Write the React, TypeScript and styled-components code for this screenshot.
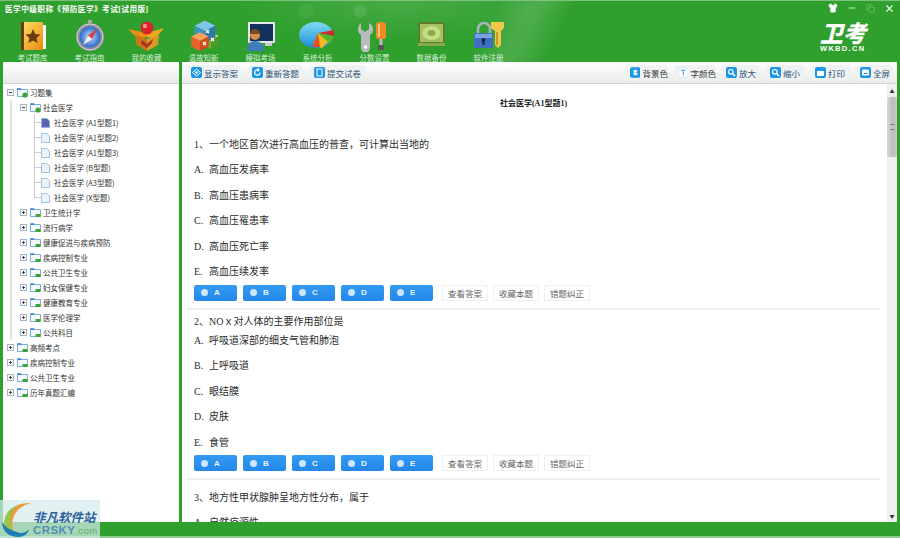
import styled, {createGlobalStyle} from "styled-components";
import {Copy, Minus, Shirt, X} from "lucide-react";

const GlobalStyle = createGlobalStyle`
  html, body {
    margin: 0;
    width: 900px;
    height: 538px;
    overflow: hidden;
    background: #2f9f2e;
    font-family: "Noto Sans CJK SC", "Liberation Sans", sans-serif;
  }
  ul { list-style: none; margin: 0; padding: 0; }
`

const Window = styled.div`
  position: relative;
  width: 900px;
  height: 538px;
  display: flex;
  flex-direction: column;
  overflow: hidden;
  background: #2f9f2e;
`
const Header = styled.header`
  height: 62px;
  flex: none;
  box-sizing: border-box;
  border-top: 1px solid #7cc27a;
  background:
    radial-gradient(circle at 360px 10px, rgba(255, 255, 255, .09) 0 6px, transparent 7px),
    radial-gradient(circle at 306px 10px, rgba(255, 255, 255, .05) 0 7px, transparent 8px),
    linear-gradient(118deg, transparent 0 440px, rgba(255, 255, 255, .13) 470px 480px, transparent 510px),
    radial-gradient(ellipse 170px 40px at 400px 0, rgba(255, 255, 255, .12), transparent),
    #2f9f2e;
`
const TitleRow = styled.div`
  height: 19px;
  box-sizing: border-box;
  display: flex;
  align-items: center;
  justify-content: space-between;
  padding: 0 5px 5px;
`
const AppTitle = styled.h1`
  margin: 0;
  font-family: "Liberation Serif", "Noto Sans CJK SC", serif;
  font-size: 7.6px;
  font-weight: 700;
  letter-spacing: .5px;
  color: #fff;
  white-space: nowrap;
`
const WindowControls = styled.div`
  display: flex;
  align-items: center;
  gap: 9px;
  color: #e9f6e9;
`
const NavRow = styled.nav`
  display: flex;
  padding-left: 4px;
`
const NavItem = styled.div`
  width: 57px;
  display: flex;
  flex-direction: column;
  align-items: center;
`
const NavLabel = styled.span`
  margin-top: 1px;
  font-size: 7.5px;
  line-height: 10px;
  color: #d6eed5;
  white-space: nowrap;
`
const Brand = styled.div`
  margin-left: auto;
  width: 80px;
  display: flex;
  flex-direction: column;
  color: #fff;
`
const BrandMark = styled.span`
  font-size: 23px;
  line-height: 21px;
  font-weight: 900;
  font-style: italic;
  margin-top: 2px;
`
const BrandSub = styled.span`
  margin-top: 2px;
  font-family: "Liberation Sans", sans-serif;
  font-size: 7.5px;
  line-height: 8px;
  font-weight: 700;
  letter-spacing: 1.3px;
`
const Body = styled.main`
  height: 460px;
  flex: none;
  display: flex;
  gap: 3px;
  padding: 0 3px;
`
const LeftPanel = styled.aside`
  width: 176px;
  flex: none;
  background: #fff;
`
const RightPanel = styled.section`
  flex: 1;
  min-width: 0;
  display: flex;
  flex-direction: column;
  background: #fff;
`
const Toolbar = styled.div`
  height: 22px;
  flex: none;
  box-sizing: border-box;
  display: flex;
  align-items: center;
  gap: 7px;
  padding: 0 4px 0 5px;
  background: linear-gradient(#fff, #e8e9e9);
  border-bottom: 1px solid #d6d6d6;
`
const ToolGroup = styled.div`
  margin-left: auto;
  display: flex;
  align-items: center;
  gap: 6px;
`
const ToolButton = styled.div<{$width: number; $dark?: boolean}>`
  width: ${props => props.$width}px;
  height: 16px;
  box-sizing: border-box;
  display: flex;
  align-items: center;
  gap: 2px;
  padding-left: 4px;
  border-radius: 4px;
  background: #f0f2f2;
  font-size: 8.5px;
  color: ${props => props.$dark ? "#3a3a3a" : "#2c5478"};
  white-space: nowrap;
`
const Tree = styled.div`
  padding-top: 1px;
`
const TreeRow = styled.div`
  height: 15px;
  display: flex;
  align-items: center;
  font-size: 7.5px;
  color: #333;
  white-space: nowrap;
`
const RootRow = styled(TreeRow)`
  padding-left: 4px;
`
const Toggle = styled.span`
  width: 7px;
  height: 7px;
  box-sizing: border-box;
  margin-right: 3px;
  flex: none;
  position: relative;
  border: 1px solid #a9b4c4;
  background: #f4f6fa;

  &::before {
    content: "";
    position: absolute;
    left: 1px;
    top: 2px;
    width: 3px;
    height: 1px;
    background: #445;
  }
`
const PlusToggle = styled(Toggle)`
  &::after {
    content: "";
    position: absolute;
    left: 2px;
    top: 1px;
    width: 1px;
    height: 3px;
    background: #445;
  }
`
const RowLabel = styled.span`
  margin-left: 2px;
`
const BranchList = styled.ul`
  margin-left: 7px;
  border-left: 2px solid #e2e2e2;
`
const BranchRow = styled(TreeRow)`
  padding-left: 8px;
`
const LeafList = styled.ul`
  margin-left: 22px;
`
const LeafRow = styled(TreeRow)`
  position: relative;
  padding-left: 7px;

  &::before {
    content: "";
    position: absolute;
    left: 0;
    top: 0;
    width: 6px;
    height: 7px;
    border-left: 1px solid #cfcfcf;
    border-bottom: 1px solid #cfcfcf;
  }

  li:not(:last-child) > &::after {
    content: "";
    position: absolute;
    left: 0;
    top: 7px;
    bottom: 0;
    border-left: 1px solid #cfcfcf;
  }
`
const LeafLabel = styled.span`
  margin-left: 4px;
`
const PaperArea = styled.div`
  flex: 1;
  min-height: 0;
  display: flex;
  overflow: hidden;
`
const Paper = styled.div`
  flex: 1;
  min-width: 0;
  padding: 0 7px 0 5px;
  font-family: "Liberation Serif", "Noto Sans CJK SC", serif;
  color: #2b2b2b;
`
const PaperTitle = styled.h2`
  margin: 0;
  height: 43px;
  box-sizing: border-box;
  padding-top: 14px;
  font-size: 8px;
  line-height: 12px;
  font-weight: 700;
  text-align: center;
  color: #222;
`
const QuestionBlock = styled.article<{$divided?: boolean}>`
  padding-top: 4px;
  border-bottom: ${props => props.$divided ? "2px solid #eeeeee" : "none"};
  padding-bottom: ${props => props.$divided ? "7px" : "0"};
`
const QuestionText = styled.div<{$height: number}>`
  height: ${props => props.$height}px;
  line-height: ${props => props.$height + 2}px;
  padding-left: 7px;
  font-size: 10px;
  white-space: nowrap;
`
const OptionRow = styled.div`
  height: 25.5px;
  line-height: 26px;
  padding-left: 7px;
  font-size: 10px;
  white-space: nowrap;
`
const OptionKey = styled.span`
  display: inline-block;
  width: 15px;
`
const AnswerRow = styled.div`
  display: flex;
  padding-left: 7px;
`
const ChoiceButton = styled.div`
  width: 43px;
  height: 16px;
  margin-right: 6px;
  box-sizing: border-box;
  display: flex;
  align-items: center;
  padding-left: 7px;
  gap: 6px;
  border-radius: 2px;
  background: linear-gradient(#349bf3, #2287ea);
  font-family: "Liberation Sans", sans-serif;
  font-size: 8px;
  font-weight: 700;
  color: #e8f3ff;
`
const ChoiceDot = styled.span`
  width: 7px;
  height: 7px;
  border-radius: 50%;
  background: #cfe5fb;
`
const LinkButton = styled.div`
  width: 46px;
  height: 16px;
  margin-right: 5px;
  box-sizing: border-box;
  border: 1px solid #efefef;
  text-align: center;
  font-family: "Noto Sans CJK SC", sans-serif;
  font-size: 8.5px;
  line-height: 14px;
  color: #666;
`
const FirstLink = styled(LinkButton)`
  margin-left: 3px;
`
const ScrollTrack = styled.div`
  width: 10px;
  flex: none;
  display: flex;
  flex-direction: column;
  align-items: center;
  background: #f0f0f0;
`
const ScrollArrow = styled.span`
  height: 13px;
  font-size: 5px;
  line-height: 13px;
  color: #333;
`
const ScrollThumb = styled.div`
  width: 10px;
  height: 60px;
  display: flex;
  align-items: center;
  justify-content: center;
  border-radius: 1px;
  background: linear-gradient(90deg, #d8d8d8, #bcbcbc 60%, #cdcdcd);

  &::after {
    content: "";
    width: 5px;
    height: 4px;
    border-top: 1px solid #888;
    border-bottom: 1px solid #888;
  }
`
const ScrollFill = styled.div`
  flex: 1;
`
const Footer = styled.footer`
  flex: 1;
  border-bottom: 2px solid #8ccb8a;
  background: #2f9f2e;
`
const Watermark = styled.div`
  position: absolute;
  left: 0;
  bottom: 0;
  width: 100px;
  height: 38px;
  display: flex;
  background: rgba(214, 236, 236, .72);
`
const WatermarkText = styled.div`
  margin-left: 1px;
  padding-top: 9px;
  display: flex;
  flex-direction: column;
`
const WatermarkName = styled.span`
  font-size: 12.5px;
  line-height: 15px;
  font-weight: 700;
  font-style: italic;
  color: #2c5f9e;
  white-space: nowrap;
`
const WatermarkUrl = styled.span`
  font-family: "Liberation Sans", sans-serif;
  font-size: 11.5px;
  line-height: 12px;
  font-weight: 700;
  letter-spacing: .4px;
  color: #4d8fb8;
  white-space: nowrap;
`
const WatermarkCom = styled.span`
  font-size: 9.5px;
  font-weight: 400;
  color: #5fb06a;
`

function BookIcon() {
    return (
        <svg width="40" height="32" viewBox="0 0 40 32">
            <defs>
                <linearGradient id="bookFill" x1="0" y1="0" x2="1" y2="1">
                    <stop offset="0" stopColor="#ffe36a"/>
                    <stop offset="1" stopColor="#e8890f"/>
                </linearGradient>
            </defs>
            <rect x="29" y="5" width="4" height="24" fill="#f4f4f0"/>
            <rect x="8" y="2" width="22" height="28" rx="1" fill="url(#bookFill)"/>
            <rect x="8" y="2" width="3" height="28" fill="#6a3d10"/>
            <polygon points="20,9 22.2,14 27.5,14.5 23.5,18 24.7,23 20,20.4 15.3,23 16.5,18 12.5,14.5 17.8,14" fill="#6b3a10"/>
        </svg>
    )
}

function CompassIcon() {
    return (
        <svg width="40" height="32" viewBox="0 0 40 32">
            <defs>
                <radialGradient id="compassFill">
                    <stop offset="0" stopColor="#bfe0ff"/>
                    <stop offset="1" stopColor="#2c68c8"/>
                </radialGradient>
            </defs>
            <rect x="18" y="0" width="4" height="3" fill="#aaa"/>
            <circle cx="20" cy="17" r="14" fill="#8c8f96"/>
            <circle cx="20" cy="17" r="13" fill="none" stroke="#d8d8dc" strokeWidth="1"/>
            <circle cx="20" cy="17" r="10.5" fill="url(#compassFill)"/>
            <polygon points="27,9 18,15.5 22,19" fill="#e23b30"/>
            <polygon points="13,25 18,15.5 22,19" fill="#f2f2f2"/>
        </svg>
    )
}

function BoxIcon() {
    return (
        <svg width="40" height="32" viewBox="0 0 40 32">
            <polygon points="20,13 37,8 28,19 20,17" fill="#f2a81d"/>
            <polygon points="20,13 1,9 11,19 20,17" fill="#e98e17"/>
            <polygon points="8,15 20,19 20,31 9,25" fill="#c9781a"/>
            <polygon points="32,15 20,19 20,31 31,25" fill="#dc9a28"/>
            <polygon points="15,20 20,24 26,19 25,23 20,28 14,24" fill="#a8341a"/>
            <circle cx="20" cy="8" r="6.5" fill="#d8232a"/>
            <circle cx="18" cy="6" r="2.2" fill="#ff8d8d"/>
        </svg>
    )
}

function Cube({x, y, scale, top, left, right}: {x: number; y: number; scale: number; top: string; left: string; right: string}) {
    return (
        <g transform={`translate(${x} ${y}) scale(${scale})`}>
            <polygon points="0,-8 8,-4 0,0 -8,-4" fill={top}/>
            <polygon points="-8,-4 0,0 0,9 -8,5" fill={left}/>
            <polygon points="8,-4 0,0 0,9 8,5" fill={right}/>
        </g>
    )
}

function CubesIcon() {
    return (
        <svg width="40" height="32" viewBox="0 0 40 32">
            <Cube x={27} y={20} scale={1} top="#b9e07a" left="#6fb53a" right="#4f9a28"/>
            <Cube x={21} y={11} scale={1.3} top="#7fc6e8" left="#3d93c4" right="#2b7aa8"/>
            <Cube x={16} y={21} scale={1.1} top="#f7a35a" left="#e8642a" right="#d34a1e"/>
            <path d="M22 10l3 3M25 10l-3 3M19 22l3 3M22 22l-3 3M27 18l3 3M30 18l-3 3" stroke="#fff" strokeWidth="1.2"/>
        </svg>
    )
}

function MonitorIcon() {
    return (
        <svg width="40" height="32" viewBox="0 0 40 32">
            <rect x="7" y="2" width="27" height="21" rx="1" fill="#e4e7ea"/>
            <rect x="9" y="4" width="23" height="17" fill="#12325c"/>
            <rect x="24" y="23" width="7" height="3" fill="#c6cacd"/>
            <circle cx="14" cy="15" r="5" fill="#d9904a"/>
            <path d="M9 14a5 5 0 0 1 10 0z" fill="#7a4a20"/>
            <path d="M6 31c0-8 4-10 8-10s9 2 9 10z" fill="#3f7fb8"/>
        </svg>
    )
}

function PieIcon() {
    return (
        <svg width="40" height="32" viewBox="0 0 40 32">
            <defs>
                <linearGradient id="pieFill" x1="0" y1="0" x2="0" y2="1">
                    <stop offset="0" stopColor="#7fdcf4"/>
                    <stop offset="1" stopColor="#1a8ed0"/>
                </linearGradient>
            </defs>
            <ellipse cx="18" cy="15" rx="17" ry="13" fill="url(#pieFill)"/>
            <polygon points="20,13 36,10 36,16 24,14" fill="#d12a2a"/>
            <polygon points="20,13 36,16 32,24 24,17" fill="#52b52c"/>
            <polygon points="20,13 30,22 24,28 16,26" fill="#f4b81c"/>
            <polygon points="20,13 22,27 14,27" fill="#e8541e"/>
        </svg>
    )
}

function ToolsIcon() {
    return (
        <svg width="40" height="32" viewBox="0 0 40 32">
            <path d="M6 3v6l4 3 4-3V3c4 2 5 7 3 10l-2 2v13a4 4 0 0 1-9 0V15l-2-2C2 10 3 5 6 3z" fill="#b9bcbc"/>
            <circle cx="10.5" cy="27" r="1.8" fill="#fff"/>
            <rect x="21" y="2" width="10" height="17" rx="3" fill="#f28a22"/>
            <rect x="23" y="4" width="2" height="13" fill="#ffc680"/>
            <rect x="24.5" y="19" width="3" height="6" fill="#bbb"/>
            <rect x="23" y="25" width="6" height="5" rx="1" fill="#555"/>
        </svg>
    )
}

function DriveIcon() {
    return (
        <svg width="40" height="32" viewBox="0 0 40 32">
            <rect x="6" y="2" width="27" height="24" rx="2" fill="#5d7d2c"/>
            <rect x="8" y="4" width="23" height="18" fill="#a3c25c"/>
            <ellipse cx="19.5" cy="13" rx="9" ry="7" fill="#c6dc86"/>
            <ellipse cx="19.5" cy="13" rx="4" ry="3" fill="#8cab47"/>
            <rect x="6" y="23" width="27" height="3" fill="#8aa84a"/>
        </svg>
    )
}

function LockIcon() {
    return (
        <svg width="40" height="32" viewBox="0 0 40 32">
            <path d="M9 14V9a6 6 0 0 1 12 0v5" fill="none" stroke="#a8b4c6" strokeWidth="2.5"/>
            <rect x="5" y="13" width="19" height="15" rx="1" fill="#3e6fc0"/>
            <rect x="6" y="14" width="17" height="4" fill="#7ba1e0"/>
            <circle cx="14.5" cy="20" r="2" fill="#12264f"/>
            <rect x="13.5" y="20" width="2" height="5" fill="#12264f"/>
            <path d="M22 2h13v6l-3 3v14l-3 3-3-3V11l-4-3z" fill="#f1c84a"/>
            <rect x="27" y="12" width="2" height="13" fill="#c89c22"/>
        </svg>
    )
}

function ToolGlyph({kind}: {kind: string}) {
    if (kind === "font") {
        return (
            <svg width="11" height="11" viewBox="0 0 11 11">
                <rect x=".5" y=".5" width="10" height="10" rx="2" fill="#fff" stroke="#cde6f8"/>
                <path d="M3 3h5M5.5 3v5.5" stroke="#3aa0e6" strokeWidth="1"/>
            </svg>
        )
    }
    return (
        <svg width="11" height="11" viewBox="0 0 11 11">
            <rect width="11" height="11" rx="2" fill="#1c97e8"/>
            {kind === "eye" && <><path d="M1.5 5.5L5.5 2l4 3.5-4 3.5z" fill="none" stroke="#fff"/><circle cx="5.5" cy="5.5" r="1.2" fill="#fff"/></>}
            {kind === "redo" && <path d="M8 5.5A2.7 2.7 0 1 1 6 2.900M5.5 1.5l1.5 1.400L5.5 4.300" fill="none" stroke="#fff" strokeWidth="1.2"/>}
            {kind === "paper" && <rect x="3" y="2" width="5" height="7" fill="none" stroke="#fff"/>}
            {kind === "bg" && <path d="M3.5 2.5h3c2 0 2 2.700 0 3 2.300 0 2.300 3 0 3h-3zM4.700 5.5h1.500" fill="#fff" stroke="#1c97e8" strokeWidth=".5"/>}
            {kind === "zoom" && <><circle cx="4.8" cy="4.8" r="2.3" fill="none" stroke="#fff" strokeWidth="1.2"/><path d="M6.5 6.5L9 9" stroke="#fff" strokeWidth="1.5"/></>}
            {kind === "print" && <rect x="2" y="4" width="7" height="5" fill="#fff"/>}
            {kind === "full" && <><rect x="2" y="2.5" width="7" height="6" rx="1" fill="#fff"/><path d="M3.5 6.5h4" stroke="#1c97e8"/></>}
        </svg>
    )
}

function FolderIcon({kind}: {kind: "open" | "closed"}) {
    return (
        <svg width="11" height="11" viewBox="0 0 11 11" style={{flex: "none"}}>
            <path d="M.5 2.5V1.500h3l1 1h6v7H.5z" fill="#f4f8fc" stroke="#5b9ad6" strokeWidth=".8"/>
            <rect x=".5" y="1.5" width="4" height="1.5" fill="#3b8ae0"/>
            {kind === "open"
                ? <circle cx="8" cy="8" r="2.6" fill="#3aa52f"/>
                : <rect x="5.5" y="7" width="5" height="3" fill="#3aa52f"/>}
        </svg>
    )
}

function DocIcon({active}: {active?: boolean}) {
    return (
        <svg width="9" height="10" viewBox="0 0 9 10" style={{flex: "none"}}>
            <path d="M.5.5h5.500l2.500 2.500v6.500h-8z" fill={active ? "#5a62b4" : "#eaf3fc"} stroke="#8cb2da" strokeWidth=".8"/>
        </svg>
    )
}

const navItems = [
    {label: "考试题库", icon: <BookIcon/>},
    {label: "考试指南", icon: <CompassIcon/>},
    {label: "我的收藏", icon: <BoxIcon/>},
    {label: "温故知新", icon: <CubesIcon/>},
    {label: "模拟考场", icon: <MonitorIcon/>},
    {label: "系统分析", icon: <PieIcon/>},
    {label: "分数设置", icon: <ToolsIcon/>},
    {label: "数据备份", icon: <DriveIcon/>},
    {label: "软件注册", icon: <LockIcon/>},
]

const leftTools = [
    {label: "显示答案", kind: "eye", width: 54},
    {label: "重新答题", kind: "redo", width: 55},
    {label: "提交试卷", kind: "paper", width: 56},
]

const rightTools = [
    {label: "背景色", kind: "bg", width: 42, dark: true},
    {label: "字颜色", kind: "font", width: 42, dark: true},
    {label: "放大", kind: "zoom", width: 38},
    {label: "缩小", kind: "zoom", width: 39},
    {label: "打印", kind: "print", width: 39},
    {label: "全屏", kind: "full", width: 37},
]

const leaves = ["社会医学 (A1型题1)", "社会医学 (A1型题2)", "社会医学 (A1型题3)", "社会医学 (B型题)", "社会医学 (A3型题)", "社会医学 (X型题)"]
const branches = ["卫生统计学", "流行病学", "健康促进与疾病预防", "疾病控制专业", "公共卫生专业", "妇女保健专业", "健康教育专业", "医学伦理学", "公共科目"]
const roots = ["高频考点", "疾病控制专业", "公共卫生专业", "历年真题汇编"]

const questions = [
    {
        title: "1、一个地区首次进行高血压的普查，可计算出当地的",
        height: 26,
        options: ["高血压发病率", "高血压患病率", "高血压罹患率", "高血压死亡率", "高血压续发率"],
    },
    {
        title: "2、NOｘ对人体的主要作用部位是",
        height: 14,
        options: ["呼吸道深部的细支气管和肺泡", "上呼吸道", "眼结膜", "皮肤", "食管"],
    },
]

const letters = ["A", "B", "C", "D", "E"]

function App() {
    return (
        <Window>
            <GlobalStyle/>
            <Header>
                <TitleRow>
                    <AppTitle>医学中级职称《预防医学》考试[试用版]</AppTitle>
                    <WindowControls>
                        <Shirt size={10} fill="#fff" strokeWidth={1.5}/>
                        <Minus size={10} strokeWidth={2}/>
                        <Copy size={9} strokeWidth={1.2} color="#a9d8a8"/>
                        <X size={11} strokeWidth={2.5}/>
                    </WindowControls>
                </TitleRow>
                <NavRow>
                    {navItems.map(item =>
                        <NavItem key={item.label}>
                            {item.icon}
                            <NavLabel>{item.label}</NavLabel>
                        </NavItem>)
                    }
                    <Brand>
                        <BrandMark>卫考</BrandMark>
                        <BrandSub>WKBD.CN</BrandSub>
                    </Brand>
                </NavRow>
            </Header>
            <Body>
                <LeftPanel>
                    <Toolbar/>
                    <Tree>
                        <RootRow>
                            <Toggle/>
                            <FolderIcon kind="open"/>
                            <RowLabel>习题集</RowLabel>
                        </RootRow>
                        <BranchList>
                            <li>
                                <BranchRow>
                                    <Toggle/>
                                    <FolderIcon kind="open"/>
                                    <RowLabel>社会医学</RowLabel>
                                </BranchRow>
                                <LeafList>
                                    {leaves.map((leaf, index) =>
                                        <li key={leaf}>
                                            <LeafRow>
                                                <DocIcon active={index === 0}/>
                                                <LeafLabel>{leaf}</LeafLabel>
                                            </LeafRow>
                                        </li>)
                                    }
                                </LeafList>
                            </li>
                            {branches.map(branch =>
                                <li key={branch}>
                                    <BranchRow>
                                        <PlusToggle/>
                                        <FolderIcon kind="closed"/>
                                        <RowLabel>{branch}</RowLabel>
                                    </BranchRow>
                                </li>)
                            }
                        </BranchList>
                        {roots.map(root =>
                            <RootRow key={root}>
                                <PlusToggle/>
                                <FolderIcon kind="closed"/>
                                <RowLabel>{root}</RowLabel>
                            </RootRow>)
                        }
                    </Tree>
                </LeftPanel>
                <RightPanel>
                    <Toolbar>
                        {leftTools.map(tool =>
                            <ToolButton key={tool.label} $width={tool.width}>
                                <ToolGlyph kind={tool.kind}/>
                                {tool.label}
                            </ToolButton>)
                        }
                        <ToolGroup>
                            {rightTools.map(tool =>
                                <ToolButton key={tool.label} $width={tool.width} $dark={tool.dark}>
                                    <ToolGlyph kind={tool.kind}/>
                                    {tool.label}
                                </ToolButton>)
                            }
                        </ToolGroup>
                    </Toolbar>
                    <PaperArea>
                        <Paper>
                            <PaperTitle>社会医学(A1型题1)</PaperTitle>
                            {questions.map(question =>
                                <QuestionBlock key={question.title} $divided>
                                    <QuestionText $height={question.height}>{question.title}</QuestionText>
                                    {question.options.map((option, index) =>
                                        <OptionRow key={option}>
                                            <OptionKey>{letters[index]}.</OptionKey>{option}
                                        </OptionRow>)
                                    }
                                    <AnswerRow>
                                        {letters.map(letter =>
                                            <ChoiceButton key={letter}>
                                                <ChoiceDot/>{letter}
                                            </ChoiceButton>)
                                        }
                                        <FirstLink>查看答案</FirstLink>
                                        <LinkButton>收藏本题</LinkButton>
                                        <LinkButton>错题纠正</LinkButton>
                                    </AnswerRow>
                                </QuestionBlock>)
                            }
                            <QuestionBlock>
                                <QuestionText $height={26}>3、地方性甲状腺肿呈地方性分布，属于</QuestionText>
                                <OptionRow><OptionKey>A.</OptionKey>自然疫源性</OptionRow>
                            </QuestionBlock>
                        </Paper>
                        <ScrollTrack>
                            <ScrollArrow>▲</ScrollArrow>
                            <ScrollThumb/>
                            <ScrollFill/>
                            <ScrollArrow>▼</ScrollArrow>
                        </ScrollTrack>
                    </PaperArea>
                </RightPanel>
            </Body>
            <Footer/>
            <Watermark>
                <svg width="32" height="38" viewBox="0 0 32 38" style={{flex: "none"}}>
                    <path d="M8 30C0 16 12 2 31 3 18 6 10 16 13 30z" fill="#ee9b3d"/>
                    <path d="M5 30C2 18 8 8 17 6 10 13 8 22 14 33z" fill="#9cc34a"/>
                    <path d="M2 22c0 10 8 15 16 15 6 0 10-3 11-8-3 4-8 5-12 3C10 30 5 27 2 22z" fill="#1f7fb5"/>
                </svg>
                <WatermarkText>
                    <WatermarkName>非凡软件站</WatermarkName>
                    <WatermarkUrl>CRSKY<WatermarkCom>.com</WatermarkCom></WatermarkUrl>
                </WatermarkText>
            </Watermark>
        </Window>
    )
}

export default App
